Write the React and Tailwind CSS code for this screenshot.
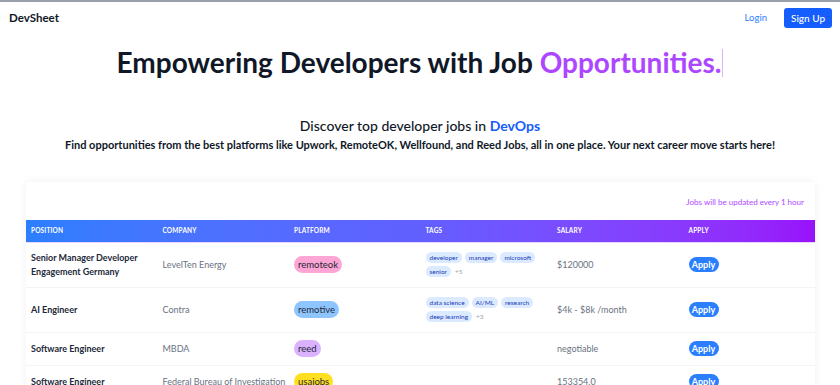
import React from 'react';

const jobs = [
  {
    id: 1,
    position: ['Senior Manager Developer', 'Engagement Germany'],
    company: 'LevelTen Energy',
    platform: 'remoteok',
    tags: ['developer', 'manager', 'microsoft', 'senior'],
    more: 5,
    salary: '$120000',
    h: 'h-[45px]',
  },
  {
    id: 2,
    position: ['AI Engineer'],
    company: 'Contra',
    platform: 'remotive',
    tags: ['data science', 'AI/ML', 'research', 'deep learning'],
    more: 3,
    salary: '$4k - $8k /month',
    h: 'h-[45px]',
  },
  {
    id: 3,
    position: ['Software Engineer'],
    company: 'MBDA',
    platform: 'reed',
    tags: [],
    salary: 'negotiable',
    h: 'h-[33px]',
  },
  {
    id: 4,
    position: ['Software Engineer'],
    company: 'Federal Bureau of Investigation',
    platform: 'usajobs',
    tags: [],
    salary: '153354.0',
    h: 'h-[33px]',
  },
];

const platformColors = {
  remoteok: 'bg-pink-300',
  remotive: 'bg-blue-300',
  reed: 'bg-purple-300',
  usajobs: 'bg-yellow-300',
};

const columns = ['Position', 'Company', 'Platform', 'Tags', 'Salary', 'Apply'];

const App = () => {
  return (
    <div className="min-h-screen bg-white border-t-2 border-gray-400 font-['Lato',sans-serif] text-gray-900 overflow-hidden">
      <nav className="flex items-center justify-between h-[32px] pl-[9px] pr-[8px]">
        <div className="text-[11.5px] font-bold">DevSheet</div>
        <div className="flex items-center gap-[17px]">
          <a className="text-[9.5px] text-blue-500">Login</a>
          <button className="bg-blue-600 text-white text-[10px] rounded-[3px] w-[48px] h-[20px] font-medium">
            Sign Up
          </button>
        </div>
      </nav>

      <h1 className="text-center text-[28px] font-bold mt-[8px] leading-[40px]">
        Empowering Developers with Job <span className="text-purple-500">Opportunities.</span>
        <span className="inline-block w-[1px] h-[28px] bg-purple-300 align-[-4px] ml-[1px]" />
      </h1>

      <h2 className="text-center text-[14px] font-medium mt-[34px] leading-[20px]">
        Discover top developer jobs in <span className="text-blue-600 font-bold">DevOps</span>
      </h2>
      <p className="text-center text-[11px] font-bold mt-[1px] leading-[16px]">
        Find opportunities from the best platforms like Upwork, RemoteOK, Wellfound, and Reed Jobs, all in one place. Your next career move starts here!
      </p>

      <div className="mt-[29px] ml-[26px] w-[789px] bg-white shadow-[0_0_8px_rgba(0,0,0,0.06)]">
        <div className="flex justify-end h-[38px] items-center pr-[11px] pt-[1px]">
          <span className="text-[8px] text-purple-500">Jobs will be updated every 1 hour</span>
        </div>
        <table className="w-full table-fixed border-collapse">
          <thead>
            <tr className="h-[22px] bg-gradient-to-r from-blue-500 via-indigo-500 to-purple-600 border-b border-purple-200">
              {columns.map(c => (
                <th key={c} className="text-left pl-[5px] text-[6.5px] font-bold uppercase text-white tracking-wide">
                  {c}
                </th>
              ))}
            </tr>
          </thead>
          <tbody>
            {jobs.map(job => (
              <tr key={job.id} className={`${job.h} border-b border-gray-100`}>
                <td className="pl-[5px] text-[9px] font-bold text-gray-800 leading-[14px]">
                  {job.position.map(l => (
                    <div key={l}>{l}</div>
                  ))}
                </td>
                <td className="pl-[5px] text-[9px] text-gray-500 whitespace-nowrap">{job.company}</td>
                <td className="pl-[5px]">
                  <div className="flex">
                    <span className={`rounded-full px-[4px] h-[17px] leading-[17px] text-[9.5px] text-gray-800 ${platformColors[job.platform]}`}>
                      {job.platform}
                    </span>
                  </div>
                </td>
                <td className="pl-[5px]">
                  <div className="flex flex-wrap gap-x-[3px] gap-y-[3px] items-center w-[122px]">
                    {job.tags.map(t => (
                      <span key={t} className="rounded-full bg-blue-100 text-blue-800 text-[6.5px] px-[4px] h-[11px] leading-[11px]">
                        {t}
                      </span>
                    ))}
                    {job.more && <span className="text-[6.5px] text-gray-400 ml-[1px]">+{job.more}</span>}
                  </div>
                </td>
                <td className="pl-[5px] text-[9px] text-gray-500">{job.salary}</td>
                <td className="pl-[5px]">
                  <div className="flex">
                    <button className="bg-blue-500 text-white font-bold text-[9px] rounded-full w-[30px] h-[15px] leading-[15px]">
                      Apply
                    </button>
                  </div>
                </td>
              </tr>
            ))}
          </tbody>
        </table>
      </div>
    </div>
  );
};

export default App;
